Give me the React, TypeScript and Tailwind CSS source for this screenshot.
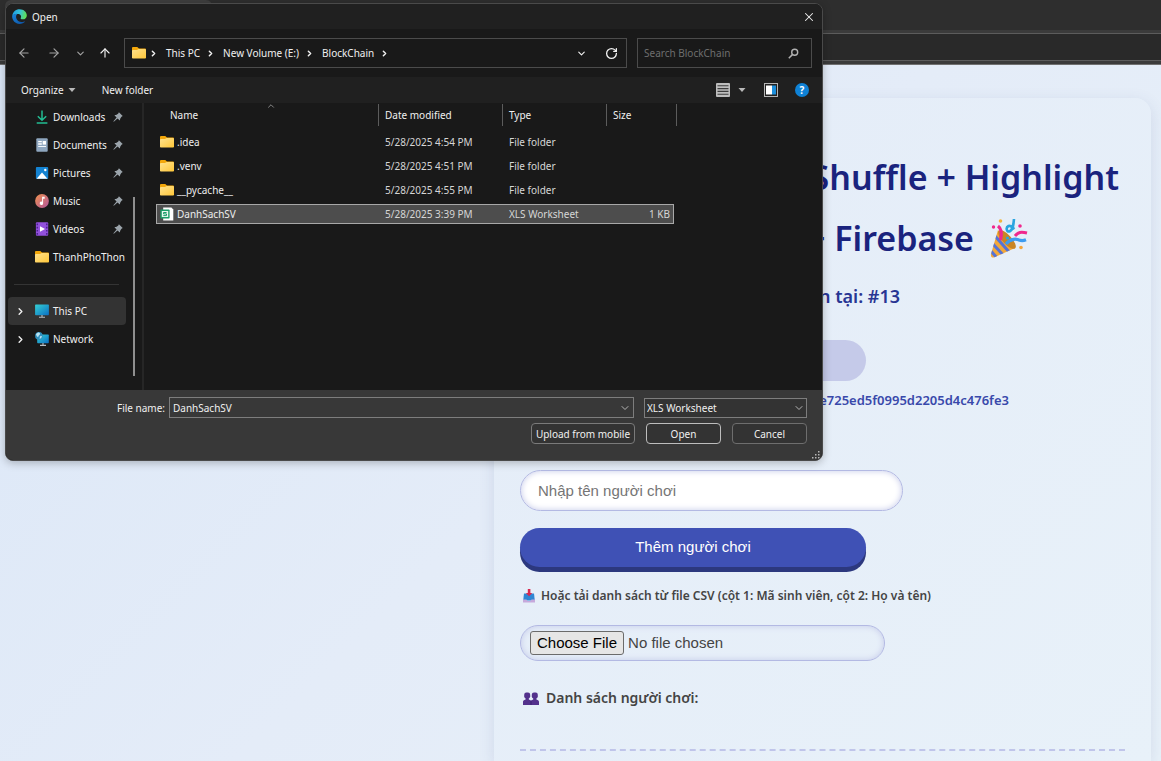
import React from "react";
import {
  ArrowLeft,
  ArrowRight,
  ArrowUp,
  ChevronDown,
  ChevronRight,
  ChevronUp,
  RotateCw,
  X,
} from "lucide-react";

function EdgeIcon() {
  return (
    <svg viewBox="0 0 16 16" className="size-[15px]" aria-hidden="true">
      <defs>
        <linearGradient id="edgeTop" x1="0" y1="0.3" x2="1" y2="0.5">
          <stop offset="0" stopColor="#1b9de2" />
          <stop offset="0.5" stopColor="#35c1d8" />
          <stop offset="1" stopColor="#62e04f" />
        </linearGradient>
        <linearGradient id="edgeLow" x1="0" y1="0" x2="1" y2="1">
          <stop offset="0" stopColor="#1a86dc" />
          <stop offset="1" stopColor="#0c4fa0" />
        </linearGradient>
      </defs>
      <path d="M.2 7.4C.8 3 4 .2 8 .2c4.700 0 7.800 3.200 7.800 6.600 0 2.500-1.900 4.200-4.200 4.200-1.900 0-2.700-.8-2.300-1.500 1.200-2-.3-4.300-3.200-4.300C3.400 5.200 1 6 .2 7.400z" fill="url(#edgeTop)" />
      <path d="M.2 7.400C1 5.800 3.400 4.700 5.700 5.100 4.400 6.300 4 8 4.600 9.900c.9 2.800 3.900 4.800 7.600 3.800.9-.2 1.500-.6 1.900-.7C12.700 14.900 10.500 15.900 8 15.900 3.400 15.900-.2 12.100.2 7.400z" fill="url(#edgeLow)" />
    </svg>
  );
}

function FolderIcon() {
  return (
    <svg viewBox="0 0 14 12" className="h-3 w-3.5 shrink-0" aria-hidden="true">
      <defs>
        <linearGradient id="folderFront" x1="0" y1="0" x2="1" y2="1">
          <stop offset="0" stopColor="#ffe28f" />
          <stop offset="1" stopColor="#ffc738" />
        </linearGradient>
      </defs>
      <path d="M0 1.300C0 .6.500.1 1.200.1h3.600c.4 0 .7.100 1 .4L7 1.600h5.800c.7 0 1.200.5 1.200 1.200V6H0z" fill="#f3a70a" />
      <path d="M0 3.900c0-.5.300-.9.900-.9h3.900c.4 0 .8-.1 1.100-.4l.8-.6h6.400c.5 0 .9.400.9.900v7.500c0 .7-.5 1.200-1.200 1.200H1.200c-.7 0-1.200-.5-1.200-1.200z" fill="url(#folderFront)" />
    </svg>
  );
}

function SearchIcon() {
  return (
    <svg viewBox="0 0 11 11" className="size-[11px]" fill="none" stroke="#b0b0b0" aria-hidden="true">
      <circle cx="6.700" cy="4.200" r="3" strokeWidth="1.400" />
      <path d="M4.600 6.400.8 10.200" strokeWidth="1.500" />
    </svg>
  );
}

function DownloadsIcon() {
  return (
    <svg viewBox="0 0 14 14" className="size-3.5" fill="none" stroke="#22bd93" strokeWidth="1.500" aria-hidden="true">
      <path d="M7 .5v9.800M2.800 6.200 7 10.300l4.200-4.100M1.700 13.100h10.700" />
    </svg>
  );
}

function DocumentsIcon() {
  return (
    <svg viewBox="0 0 14 14" className="size-3.5" aria-hidden="true">
      <rect x="1.300" y=".2" width="11.400" height="13.600" rx="1" fill="#8ea6bf" />
      <path d="M3.200 3.600h3.600M3.200 6h3.600" stroke="#fff" strokeWidth="1.300" />
      <rect x="7.700" y="3" width="3.300" height="3.600" fill="#fff" />
      <path d="M3.200 8.500H11" stroke="#f4f8fc" strokeWidth="1.200" />
    </svg>
  );
}

function PicturesIcon() {
  return (
    <svg viewBox="0 0 14 14" className="size-3.5" aria-hidden="true">
      <rect x=".9" y="1" width="12.300" height="12" rx="1" fill="#1483d2" />
      <path d="M1.600 12.800 7 6.600l5.500 6.200z" fill="#fff" />
      <circle cx="10.300" cy="4" r="1.200" fill="#fff" />
    </svg>
  );
}

function MusicIcon() {
  return (
    <svg viewBox="0 0 14 14" className="size-3.5" aria-hidden="true">
      <defs>
        <linearGradient id="musicDisc" x1="0" y1="0" x2="1" y2="1">
          <stop offset="0" stopColor="#f0924f" />
          <stop offset="1" stopColor="#b2559c" />
        </linearGradient>
      </defs>
      <circle cx="7" cy="7" r="6.900" fill="url(#musicDisc)" />
      <path d="M7.100 2.800h2.600v1.900H8.100v4.700a1.700 1.700 0 1 1-1-1.600z" fill="#fff" />
    </svg>
  );
}

function VideosIcon() {
  return (
    <svg viewBox="0 0 14 14" className="size-3.5" aria-hidden="true">
      <rect x=".9" y=".3" width="12.300" height="13.400" rx="1" fill="#9250dc" />
      <path d="M2.300 1.500v11.500M11.800 1.500v11.500" stroke="#4d2091" strokeWidth="1.500" strokeDasharray="1.700 1.500" />
      <path d="M5 4.300 10 7l-5 2.800z" fill="#fff" />
    </svg>
  );
}

function MonitorIcon({ network = false }: { network?: boolean }) {
  return (
    <svg viewBox="0 0 14 14" className="size-3.5" aria-hidden="true">
      <defs>
        <linearGradient id="screen" x1="0" y1="0" x2="1" y2="1">
          <stop offset="0" stopColor="#35d0d4" />
          <stop offset="1" stopColor="#0b6fc4" />
        </linearGradient>
      </defs>
      {network ? (
        <>
          <rect x="2.200" y="2.500" width="11.600" height="8.700" rx=".7" fill="url(#screen)" />
          <path d="M8 11v2M5 13.400h6" stroke="#b8bec4" strokeWidth="1.100" />
          <circle cx="3.900" cy="3.900" r="3.800" fill="#2f8fbd" />
          <path d="M1 2.300C2.500.2 4.600.2 5 1.500S3.700 3 3.500 4.300 1.500 4.600 1 2.300zM5 4.200l2-.3-.8 2.300-1.700.5z" fill="#b9e4f4" />
        </>
      ) : (
        <>
          <rect x=".1" y=".5" width="13.800" height="10.800" rx=".7" fill="url(#screen)" />
          <path d="M7 11v2M4 13.200h6" stroke="#b8bec4" strokeWidth="1.100" />
        </>
      )}
    </svg>
  );
}

function PinIcon() {
  return (
    <svg viewBox="0 0 10 10" className="size-2.5" aria-hidden="true">
      <path d="M5.900.3 9.700 4.100 8.500 4.700 7.300 6.400 6.800 8.500 4.500 6.400.8 9.700.4 9.300 3.600 5.600 1.400 3.300 3.600 2.700 5.300 1.500z" fill="#9ba4ab" />
    </svg>
  );
}

function SheetIcon() {
  return (
    <svg viewBox="0 0 14 14" className="size-3.5 shrink-0" aria-hidden="true">
      <path d="M3.200.5h8.200l1.900 2v11H3.200z" fill="#fff" />
      <rect x=".4" y="2.500" width="9.200" height="9" rx=".7" fill="#1b9d68" />
      <rect x="1.800" y="4" width="6.400" height="6" fill="#e9f8f0" />
      <path d="M6.600 5.500H3.500v1.400h3v1.700H3.300" fill="none" stroke="#1b9d68" strokeWidth="1" />
    </svg>
  );
}

function CaretDown() {
  return (
    <svg viewBox="0 0 8 4" className="h-1 w-2" aria-hidden="true">
      <path d="M.5 0h7L4 4z" fill="#b8b8b8" />
    </svg>
  );
}

function PartyIcon() {
  return (
    <svg viewBox="0 0 38 40" className="h-10 w-[38px]" aria-hidden="true">
      <defs>
        <clipPath id="cone">
          <path d="M8 11 25 29 4 38.500Q.5 39 1 35z" />
        </clipPath>
      </defs>
      <path d="M8 11 25 29 4 38.500Q.5 39 1 35z" fill="#f3a83a" />
      <g clipPath="url(#cone)" stroke="#5573d6" strokeWidth="3" fill="none">
        <path d="M5 17 20 34M2 24l13 14M0 31l8 9" />
      </g>
      <ellipse cx="17" cy="20.500" rx="4.500" ry="12" transform="rotate(-43 17 20.500)" fill="#c98524" />
      <path d="M8 7c4 3 4 8 2.500 14" stroke="#f0288d" strokeWidth="3.200" fill="none" />
      <path d="M24 0c-.5 6-1 11-4.500 12.500-3 .5-4-4-1-5.500 2.500-.8 4 1.500 6 3" stroke="#2aa5e0" strokeWidth="2.600" fill="none" />
      <path d="M25 17c3-4 6-4.500 12-3" stroke="#f0288d" strokeWidth="3" fill="none" />
      <path d="M16 25c5-6 11-5 13-4 2 .8 4 1 7-.2" stroke="#3d9cf0" strokeWidth="3.200" fill="none" />
      <circle cx="10.500" cy="2" r="1.800" fill="#f4b63b" />
      <circle cx="3.500" cy="8" r="1.700" fill="#f0288d" />
      <circle cx="30" cy="7" r="1.800" fill="#f0288d" />
      <circle cx="17.500" cy="19" r="1.600" fill="#2aa5e0" />
      <circle cx="31" cy="28.500" r="1.800" fill="#f4a63b" />
    </svg>
  );
}

function InboxIcon() {
  return (
    <svg viewBox="0 0 12 14" className="h-3.5 w-3" aria-hidden="true">
      <path d="M1 4.500h10l.8 7H.2z" fill="#2f86d3" />
      <path d="M0 10.500h3.500L4.500 12h3l1-1.500H12v3H0z" fill="#c6a9dc" />
      <path d="M4.800 0h2.600v4h1.900L6.100 7.200 2.900 4h1.900z" fill="#d8284f" />
    </svg>
  );
}

function PeopleIcon() {
  return (
    <svg viewBox="0 0 16 13" className="h-[13px] w-4" aria-hidden="true">
      <g fill="#53318c">
        <rect x="1.200" y=".5" width="6" height="6" rx="2.200" />
        <rect x="8.800" y=".5" width="6" height="6" rx="2.200" />
        <path d="M2.600 5h3.200v2.600l2.200 1 2.200-1V5h3.200v2.600c1.800.4 2.600 1.200 2.600 2.400v3H0v-3c0-1.200.8-2 2.600-2.400z" />
      </g>
      <path d="M8 9v4" stroke="#3c2170" strokeWidth="1" />
    </svg>
  );
}

function ResizeGrip() {
  return (
    <svg viewBox="0 0 8 8" className="size-2" fill="#b5b5b5" aria-hidden="true">
      <path d="M6 0h1.500v1.500H6zM3 3h1.500v1.500H3zM6 3h1.500v1.500H6zM0 6h1.500v1.500H0zM3 6h1.500v1.500H3zM6 6h1.500v1.500H6z" />
    </svg>
  );
}

const places = [
  { name: "Downloads", icon: <DownloadsIcon />, pinned: true },
  { name: "Documents", icon: <DocumentsIcon />, pinned: true },
  { name: "Pictures", icon: <PicturesIcon />, pinned: true },
  { name: "Music", icon: <MusicIcon />, pinned: true },
  { name: "Videos", icon: <VideosIcon />, pinned: true },
  { name: "ThanhPhoThon", icon: <FolderIcon />, pinned: false },
];

const files = [
  { name: ".idea", date: "5/28/2025 4:54 PM", type: "File folder", size: "", selected: false },
  { name: ".venv", date: "5/28/2025 4:51 PM", type: "File folder", size: "", selected: false },
  { name: "__pycache__", date: "5/28/2025 4:55 PM", type: "File folder", size: "", selected: false },
  { name: "DanhSachSV", date: "5/28/2025 3:39 PM", type: "XLS Worksheet", size: "1 KB", selected: true },
];

function Sidebar() {
  return (
    <nav className="flex w-[138px] shrink-0 border-r-2 border-[#262626]">
      <ul className="w-[120px] pl-px">
        {places.map((p) => (
          <li key={p.name}>
            <button className="flex h-7 w-full items-center gap-1 pl-7 text-left">
              <span className="w-3.5 shrink-0">{p.icon}</span>
              <span className="flex-1 whitespace-nowrap">{p.name}</span>
              {p.pinned && <span className="mr-[3px] shrink-0"><PinIcon /></span>}
            </button>
          </li>
        ))}
        <li className="flex h-[26px] items-center px-[7px]" role="separator">
          <span className="h-px w-full bg-[#343434]" />
        </li>
        <li className="pl-px">
          <button className="flex h-7 w-full items-center rounded-sm bg-[#333333] pl-[7px] text-left">
            <ChevronRight size={11} strokeWidth={3} className="mr-[9px]" />
            <MonitorIcon />
            <span className="ml-1">This PC</span>
          </button>
        </li>
        <li className="pl-px">
          <button className="flex h-7 w-full items-center pl-[7px] text-left">
            <ChevronRight size={11} strokeWidth={3} className="mr-[9px]" />
            <MonitorIcon network />
            <span className="ml-1">Network</span>
          </button>
        </li>
      </ul>
      <div className="ml-[7px] mt-[94px] h-[179px] w-0.5 bg-[#8f8f8f]" />
    </nav>
  );
}

function FileTable() {
  return (
    <table className="ml-3 w-[521px] table-fixed border-separate border-spacing-0 self-start text-left">
      <thead>
        <tr className="h-[27px] align-top">
          <th className="relative w-[223px] p-0 font-normal">
            <div className="mt-px h-[22px] border-r border-[#5c5c5c] pl-3.5 leading-[22px]">Name</div>
            <ChevronUp size={10} className="absolute left-[110px] top-[-2px] text-[#9a9a9a]" />
          </th>
          <th className="w-[124px] p-0 font-normal">
            <div className="mt-px h-[22px] border-r border-[#5c5c5c] pl-1.5 leading-[22px]">Date modified</div>
          </th>
          <th className="w-[104px] p-0 font-normal">
            <div className="mt-px h-[22px] border-r border-[#5c5c5c] pl-1.5 leading-[22px]">Type</div>
          </th>
          <th className="p-0 font-normal">
            <div className="mt-px h-[22px] border-r border-[#5c5c5c] pl-1.5 leading-[22px]">Size</div>
          </th>
        </tr>
      </thead>
      <tbody className="text-[#d6d6d6]">
        {files.map((f) => {
          const cell = f.selected
            ? "flex h-5 items-center border-y border-[#a8a8a8] bg-[#4d4d4d]"
            : "flex h-5 items-center border-y border-transparent";
          return (
            <tr key={f.name} className="h-6">
              <td className="p-0">
                <div className={`${cell} gap-[3px] ${f.selected ? "border-l pl-[3px]" : "pl-1"}`}>
                  {f.selected ? <SheetIcon /> : <FolderIcon />}
                  <span className="text-[#ededed]">{f.name}</span>
                </div>
              </td>
              <td className="p-0"><div className={`${cell} pl-1.5`}>{f.date}</div></td>
              <td className="p-0"><div className={`${cell} pl-1.5`}>{f.type}</div></td>
              <td className="p-0 pr-[3px]">
                <div className={`${cell} justify-end pr-[3px] ${f.selected ? "border-r" : ""}`}>{f.size}</div>
              </td>
            </tr>
          );
        })}
      </tbody>
    </table>
  );
}

function OpenDialog() {
  return (
    <section
      role="dialog"
      aria-label="Open"
      className="absolute left-[5px] top-[3px] flex w-[818px] flex-col overflow-hidden rounded-lg border border-[#4a4a4a] bg-[#191919] font-['Noto_Sans',sans-serif] text-[10px] leading-4 text-[#f0f0f0] shadow-[0_2px_8px_rgba(0,0,0,0.25)]"
    >
      <header className="flex h-[25px] items-center bg-[#202020] pl-1.5 pr-1.5">
        <EdgeIcon />
        <h2 className="ml-[5px] flex-1">Open</h2>
        <button aria-label="Close"><X size={14} strokeWidth={1.8} /></button>
      </header>

      <div className="flex h-12 items-center pl-[11px] pr-2.5">
        <button aria-label="Back" className="text-[#a3a3a3]"><ArrowLeft size={14} /></button>
        <button aria-label="Forward" className="ml-4 text-[#a3a3a3]"><ArrowRight size={14} /></button>
        <button aria-label="Recent locations" className="ml-3.5 text-[#a3a3a3]"><ChevronDown size={11} strokeWidth={2.5} /></button>
        <button aria-label="Up" className="ml-3"><ArrowUp size={14} /></button>
        <div className="ml-3 flex h-[30px] flex-1 items-center border border-[#4b4b4b] pl-[7px] pr-2">
          <FolderIcon />
          <ChevronRight size={9} strokeWidth={4} className="ml-[3px]" />
          <button className="ml-2">This PC</button>
          <ChevronRight size={9} strokeWidth={4} className="ml-1.5" />
          <button className="ml-2">New Volume (E:)</button>
          <ChevronRight size={9} strokeWidth={4} className="ml-1.5" />
          <button className="ml-2">BlockChain</button>
          <ChevronRight size={9} strokeWidth={4} className="ml-1.5" />
          <button aria-label="Show history" className="ml-auto"><ChevronDown size={11} strokeWidth={2.5} /></button>
          <button aria-label="Refresh" className="ml-[18px]"><RotateCw size={13} strokeWidth={2.4} /></button>
        </div>
        <label className="ml-2.5 flex h-[30px] w-[175px] items-center border border-[#4b4b4b] pl-1.5 pr-3">
          <input aria-label="Search BlockChain" placeholder="Search BlockChain" className="min-w-0 flex-1 bg-transparent outline-none placeholder:text-[#6e6e6e]" />
          <SearchIcon />
        </label>
      </div>

      <div className="flex h-[26px] items-center bg-[#202020] pl-[15px] pr-[13px]">
        <button className="flex items-center gap-1">Organize <CaretDown /></button>
        <button className="ml-[26px]">New folder</button>
        <button aria-label="Change view" className="ml-auto flex items-center gap-2">
          <svg viewBox="0 0 14 14" className="size-3.5" aria-hidden="true">
            <rect width="14" height="14" rx="1" fill="#bdbdbd" />
            <path d="M1.500 2.800h11M1.500 5.600h11M1.500 8.400h11M1.500 11.200h11" stroke="#3c3c3c" strokeWidth="1.100" />
          </svg>
          <CaretDown />
        </button>
        <button aria-label="Preview pane" className="ml-[18px]">
          <svg viewBox="0 0 14 14" className="block size-3.5" aria-hidden="true">
            <rect x=".5" y=".5" width="13" height="13" fill="#222" stroke="#b5b5b5" />
            <rect x="2" y="2.500" width="6" height="9" fill="#fff" />
            <rect x="8" y="2.500" width="4" height="9" fill="#1d8fdc" />
          </svg>
        </button>
        <button aria-label="Help" className="ml-[17px] flex size-3.5 items-center justify-center rounded-full bg-[#0f82d6] font-bold leading-none text-white">?</button>
      </div>

      <div className="flex min-h-[287px]">
        <Sidebar />
        <FileTable />
      </div>

      <footer className="relative bg-[#383838] pb-4 pr-[15px] pt-[7px]">
        <div className="flex items-center">
          <label htmlFor="file-name" className="w-[163px] pr-1 text-right">File name:</label>
          <div className="flex h-[21px] flex-1 items-center border border-[#7d7d7d] pl-[3px] pr-0.5">
            <input id="file-name" defaultValue="DanhSachSV" className="min-w-0 flex-1 bg-transparent outline-none" />
            <button aria-label="Previous file names"><ChevronDown size={12} className="text-[#b5b5b5]" /></button>
          </div>
          <div className="relative ml-2.5 w-[163px]">
            <select aria-label="File type" className="block h-5 w-full appearance-none border border-[#7d7d7d] bg-[#333333] pl-0.5 outline-none">
              <option>XLS Worksheet</option>
            </select>
            <ChevronDown size={12} className="pointer-events-none absolute right-0.5 top-1 text-[#b5b5b5]" />
          </div>
        </div>
        <div className="mt-[5px] flex justify-end">
          <button className="h-[21px] w-[104px] whitespace-nowrap rounded border border-[#7a7a7a] bg-[#333333] leading-[18px]">Upload from mobile</button>
          <button className="ml-[11px] h-[21px] w-[75px] rounded border border-[#bdbdbd] bg-[#333333] leading-[18px]">Open</button>
          <button className="ml-[11px] h-[21px] w-[75px] rounded border border-[#6e6e6e] bg-[#333333] leading-[18px]">Cancel</button>
        </div>
        <span className="absolute bottom-px right-0.5"><ResizeGrip /></span>
      </footer>
    </section>
  );
}

function BrowserChrome() {
  return (
    <header className="shrink-0 border-b border-[#707070] bg-[#3b3b3b]">
      <div className="flex h-[30px] bg-[#2e2e2e] pl-[5px]">
        <div className="w-[207px] rounded-t-md bg-[#3f3f3f]" />
      </div>
      <div className="pb-[3px] pt-[3px]">
        <div className="h-7 border-y border-[#5c5c5c] bg-[#292929]" />
      </div>
    </header>
  );
}

export default function App() {
  return (
    <div className="relative flex h-screen flex-col overflow-hidden bg-[#e2ebf7]">
      <BrowserChrome />
      <main className="flex flex-1 justify-end bg-linear-135 from-[#dbe7f7] via-[#e4ecf8] to-[#e8f1f9] pr-2.5 pt-[33px] font-['Noto_Sans',sans-serif]">
        <div className="w-[657px] rounded-t-2xl bg-linear-135 from-[#e4ecf8] to-[#e8f1f9] px-[26px] pt-[49px] shadow-[0_4px_16px_rgba(60,80,130,0.13)]">
          <h1 className="text-right text-[34px] font-semibold leading-[61px] text-[#1a237e]">
            <span className="block whitespace-nowrap pr-1.5">Shuffle + Highlight</span>
            <span className="flex items-center justify-end gap-4 whitespace-nowrap pr-[97px]">
              + Firebase <PartyIcon />
            </span>
          </h1>
          <h2 className="mt-[13px] pr-[225px] text-right text-[18px] font-semibold leading-7 text-[#283593]">n tại: #13</h2>
          <div className="mt-[30px] h-[41px] w-[346px] rounded-full bg-[#c5cae9]" />
          <p className="mt-[9px] pr-[116px] text-right text-[13px] font-semibold leading-5 text-[#3949ab]">
            e725ed5f0995d2205d4c476fe3
          </p>
          <input
            aria-label="Nhập tên người chơi"
            placeholder="Nhập tên người chơi"
            className="mt-[60px] block h-[41px] w-[383px] rounded-full border border-[#b3b9e3] bg-white px-[17px] font-['Liberation_Sans',sans-serif] text-[15px] shadow-[inset_0_0_6px_#c5cae9] outline-none placeholder:text-[#757575]"
          />
          <button className="mt-[17px] block h-[39px] w-[346px] rounded-[20px] bg-[#3f51b5] font-['Liberation_Sans',sans-serif] text-[15px] text-white shadow-[0_5px_0_#2c387e]">
            Thêm người chơi
          </button>
          <label htmlFor="csv" className="mt-[19px] flex items-center gap-1.5 whitespace-nowrap pl-[3px] text-[12px] font-semibold leading-5 text-[#444444]">
            <InboxIcon />
            Hoặc tải danh sách từ file CSV (cột 1: Mã sinh viên, cột 2: Họ và tên)
          </label>
          <input
            id="csv"
            type="file"
            className="mt-[19px] block h-9 w-[365px] rounded-full border border-[#b3b9e3] px-[9px] pt-[5px] font-['Liberation_Sans',sans-serif] text-[15px] leading-6 text-[#444444] shadow-[inset_0_0_6px_#c5cae9] file:mr-1 file:h-6 file:rounded-[3px] file:border file:border-solid file:border-[#6b6b6b] file:bg-[#e6e6e6] file:px-1.5 file:leading-5 file:text-black"
          />
          <h3 className="mt-[25px] flex items-center gap-[7px] pl-[3px] text-[14px] font-semibold leading-6 text-[#444444]">
            <PeopleIcon />
            Danh sách người chơi:
          </h3>
          <hr className="mt-[39px] border-0 border-t-2 border-dashed border-[#c0c5ea]" />
        </div>
      </main>
      <OpenDialog />
    </div>
  );
}
